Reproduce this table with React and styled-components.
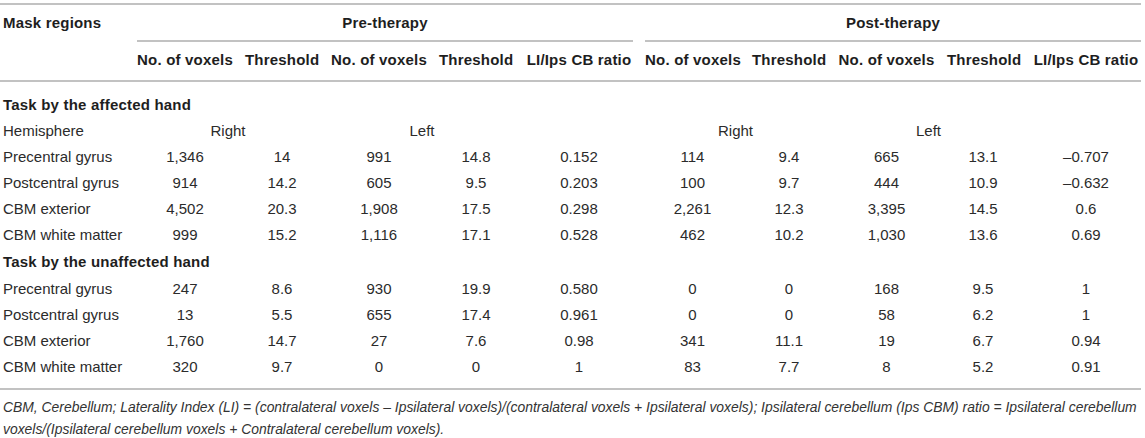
import React from 'react'
import styled, { createGlobalStyle } from 'styled-components'

const GlobalStyle = createGlobalStyle`
  html, body {
    margin: 0;
    padding: 0;
    background: #fff;
  }
  body {
    font-family: "Liberation Sans", Arial, Helvetica, sans-serif;
    color: #2b2b2b;
  }
`

const Page = styled.div`
  width: 1145px;
  padding-top: 3px;
`

const Table = styled.table`
  width: 1141px;
  border-collapse: collapse;
  table-layout: fixed;
  border-top: 2px solid #c2c2c2;
  border-bottom: 2px solid #c2c2c2;
  font-size: 15px;
  line-height: 18px;
`

const HeadRow = styled.tr`
  border-bottom: ${p => (p.$ruled ? '2px solid #c2c2c2' : 'none')};
`

const HeadCell = styled.th`
  font-weight: 700;
  color: #1e1e1e;
  letter-spacing: 0.2px;
  white-space: nowrap;
  text-align: ${p => (p.$left ? 'left' : 'center')};
  vertical-align: top;
  padding: ${p => (p.$group ? '0 6px' : p.$left ? '9px 0 0 3px' : '9px 6px 11px')};
  padding-right: ${p => (p.$last ? '0' : undefined)};
`

const GroupLabel = styled.div`
  padding: 9px 0 8px;
  border-bottom: 2px solid #c2c2c2;
`

const SectionCell = styled.td`
  font-weight: 700;
  color: #1e1e1e;
  letter-spacing: 0.2px;
  text-align: left;
  padding: ${p => p.$pad};
`

const Cell = styled.td`
  text-align: ${p => (p.$left ? 'left' : 'center')};
  white-space: nowrap;
  padding: 4px 6px;
  padding-left: ${p => (p.$left ? '3px' : '6px')};
  padding-right: ${p => (p.$last ? '0' : '6px')};
  padding-bottom: ${p => (p.$final ? '12px' : '4px')};
`

const Footnote = styled.p`
  margin: 0;
  padding: 6px 0 0 3px;
  width: 1142px;
  font-size: 13.9px;
  line-height: 22px;
  font-style: italic;
  color: #333;
`

const widths = [131, 108, 86, 108, 86, 120, 107, 86, 109, 84, 116]

const subHeads = [
  'No. of voxels', 'Threshold', 'No. of voxels', 'Threshold', 'LI/Ips CB ratio',
  'No. of voxels', 'Threshold', 'No. of voxels', 'Threshold', 'LI/Ips CB ratio',
]

const affected = [
  ['Precentral gyrus', '1,346', '14', '991', '14.8', '0.152', '114', '9.4', '665', '13.1', '–0.707'],
  ['Postcentral gyrus', '914', '14.2', '605', '9.5', '0.203', '100', '9.7', '444', '10.9', '–0.632'],
  ['CBM exterior', '4,502', '20.3', '1,908', '17.5', '0.298', '2,261', '12.3', '3,395', '14.5', '0.6'],
  ['CBM white matter', '999', '15.2', '1,116', '17.1', '0.528', '462', '10.2', '1,030', '13.6', '0.69'],
]

const unaffected = [
  ['Precentral gyrus', '247', '8.6', '930', '19.9', '0.580', '0', '0', '168', '9.5', '1'],
  ['Postcentral gyrus', '13', '5.5', '655', '17.4', '0.961', '0', '0', '58', '6.2', '1'],
  ['CBM exterior', '1,760', '14.7', '27', '7.6', '0.98', '341', '11.1', '19', '6.7', '0.94'],
  ['CBM white matter', '320', '9.7', '0', '0', '1', '83', '7.7', '8', '5.2', '0.91'],
]

function DataRow({ row, final }) {
  return (
    <tr>
      {row.map((v, i) => (
        <Cell key={i} $left={i === 0} $last={i === row.length - 1} $final={final}>
          {v}
        </Cell>
      ))}
    </tr>
  )
}

export default function App() {
  return (
    <Page>
      <GlobalStyle />
      <Table>
        <colgroup>
          {widths.map((w, i) => (
            <col key={i} style={{ width: w }} />
          ))}
        </colgroup>
        <thead>
          <tr>
            <HeadCell $left rowSpan={2}>Mask regions</HeadCell>
            <HeadCell $group colSpan={5}>
              <GroupLabel>Pre-therapy</GroupLabel>
            </HeadCell>
            <HeadCell $group $last colSpan={5}>
              <GroupLabel>Post-therapy</GroupLabel>
            </HeadCell>
          </tr>
          <HeadRow $ruled>
            {subHeads.map((h, i) => (
              <HeadCell key={i} $last={i === subHeads.length - 1}>{h}</HeadCell>
            ))}
          </HeadRow>
        </thead>
        <tbody>
          <tr>
            <SectionCell colSpan={11} $pad="14px 0 4px 3px">Task by the affected hand</SectionCell>
          </tr>
          <tr>
            <Cell $left>Hemisphere</Cell>
            <Cell colSpan={2}>Right</Cell>
            <Cell colSpan={2}>Left</Cell>
            <Cell />
            <Cell colSpan={2}>Right</Cell>
            <Cell colSpan={2}>Left</Cell>
            <Cell $last />
          </tr>
          {affected.map((r, i) => (
            <DataRow key={i} row={r} />
          ))}
          <tr>
            <SectionCell colSpan={11} $pad="5px 0 5px 3px">Task by the unaffected hand</SectionCell>
          </tr>
          {unaffected.map((r, i) => (
            <DataRow key={i} row={r} final={i === unaffected.length - 1} />
          ))}
        </tbody>
      </Table>
      <Footnote>
        CBM, Cerebellum; Laterality Index (LI) = (contralateral voxels – Ipsilateral voxels)/(contralateral voxels + Ipsilateral voxels); Ipsilateral cerebellum (Ips CBM) ratio = Ipsilateral cerebellum voxels/(Ipsilateral cerebellum voxels + Contralateral cerebellum voxels).
      </Footnote>
    </Page>
  )
}
